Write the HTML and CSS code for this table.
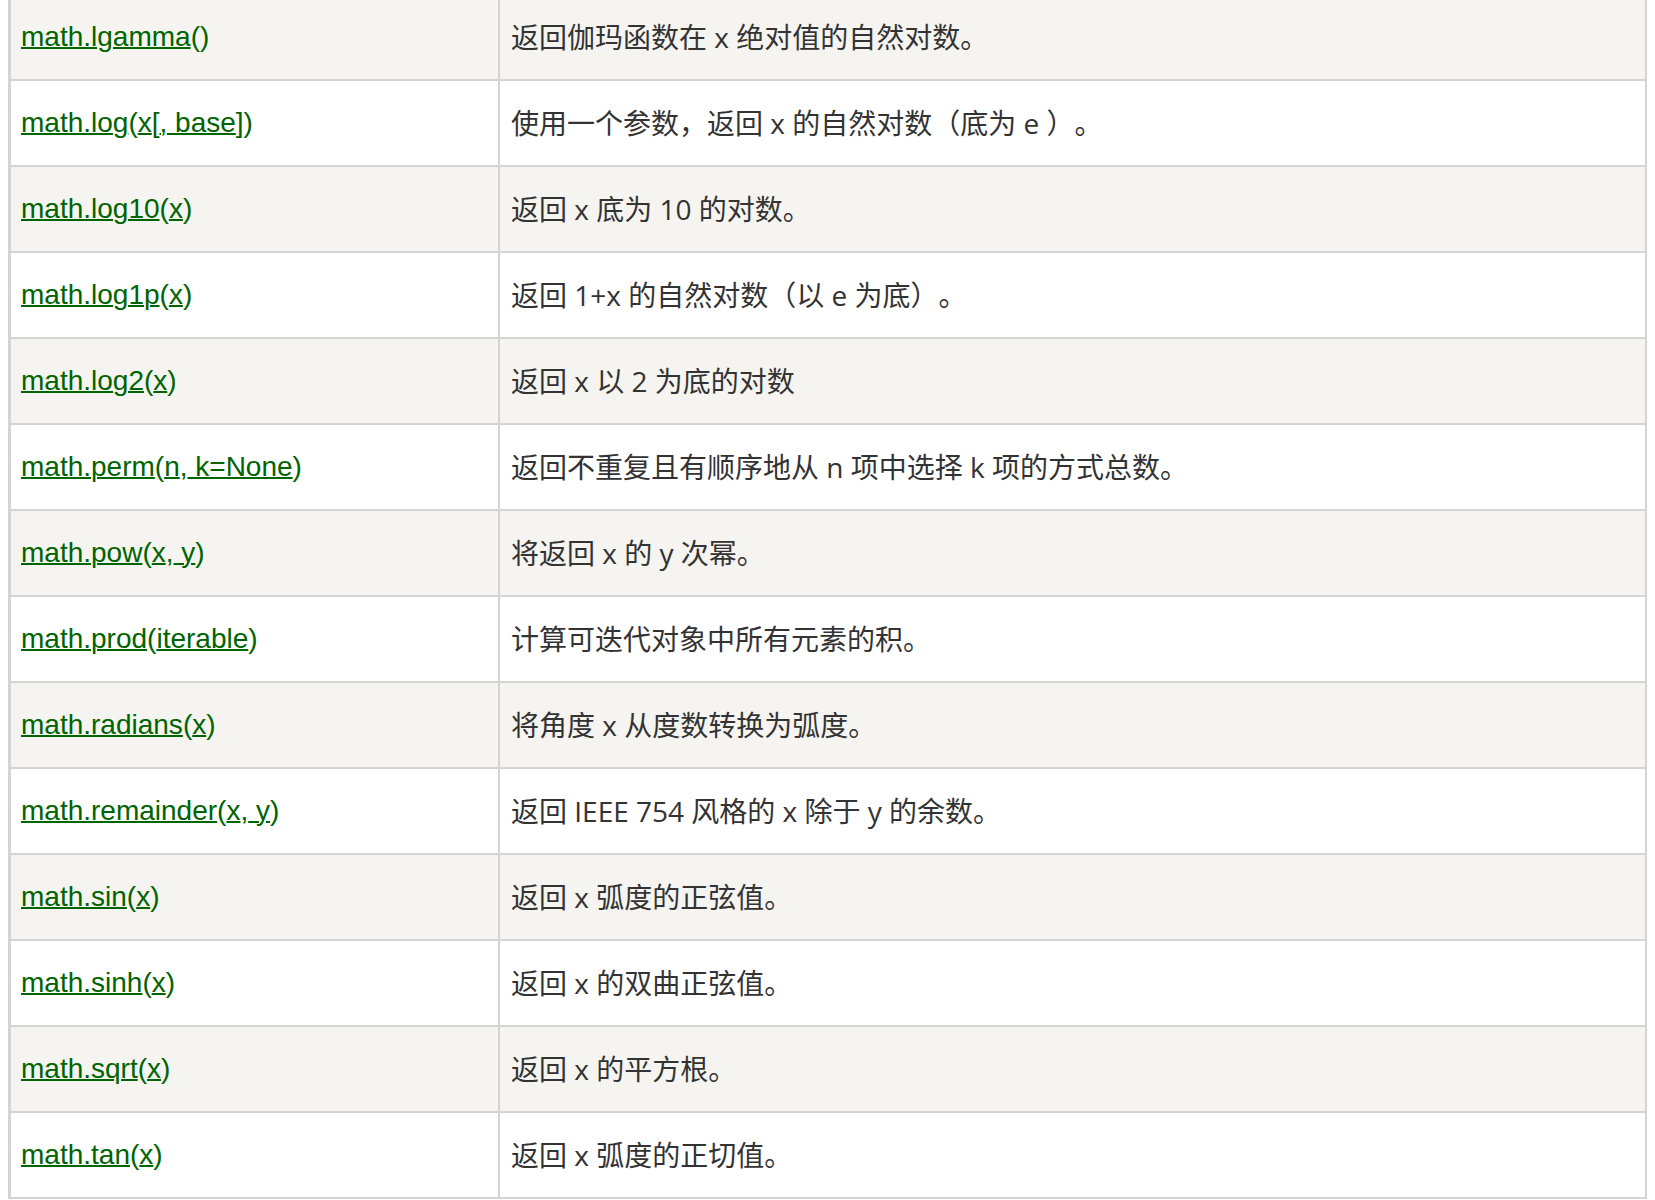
FILE: index.html
```html
<!DOCTYPE html>
<html lang="zh-CN">
<head>
<meta charset="utf-8">
<title>math</title>
<link rel="stylesheet" href="styles.css">
</head>
<body>
<table class="ref">
<tbody>
<tr><td class="fn"><a class="sig"><u>math.lgamma</u>()</a></td><td class="desc">返回伽玛函数在 x 绝对值的自然对数。</td></tr>
<tr><td class="fn"><a class="sig"><u>math.log</u>(<u>x</u>[<u>, base</u>])</a></td><td class="desc">使用一个参数，返回 x 的自然对数（底为 e ）。</td></tr>
<tr><td class="fn"><a class="sig"><u>math.log10</u>(<u>x</u>)</a></td><td class="desc">返回 x 底为 10 的对数。</td></tr>
<tr><td class="fn"><a class="sig"><u>math.log1p</u>(<u>x</u>)</a></td><td class="desc">返回 1+x 的自然对数（以 e 为底）。</td></tr>
<tr><td class="fn"><a class="sig"><u>math.log2</u>(<u>x</u>)</a></td><td class="desc">返回 x 以 2 为底的对数</td></tr>
<tr><td class="fn"><a class="sig"><u>math.perm</u>(<u>n</u>,<u> k=None</u>)</a></td><td class="desc">返回不重复且有顺序地从 n 项中选择 k 项的方式总数。</td></tr>
<tr><td class="fn"><a class="sig"><u>math.pow</u>(<u>x</u>,<u> y</u>)</a></td><td class="desc">将返回 x 的 y 次幂。</td></tr>
<tr><td class="fn"><a class="sig"><u>math.prod</u>(<u>iterable</u>)</a></td><td class="desc">计算可迭代对象中所有元素的积。</td></tr>
<tr><td class="fn"><a class="sig"><u>math.radians</u>(<u>x</u>)</a></td><td class="desc">将角度 x 从度数转换为弧度。</td></tr>
<tr><td class="fn"><a class="sig"><u>math.remainder</u>(<u>x</u>,<u> y</u>)</a></td><td class="desc">返回 IEEE 754 风格的 x 除于 y 的余数。</td></tr>
<tr><td class="fn"><a class="sig"><u>math.sin</u>(<u>x</u>)</a></td><td class="desc">返回 x 弧度的正弦值。</td></tr>
<tr><td class="fn"><a class="sig"><u>math.sinh</u>(<u>x</u>)</a></td><td class="desc">返回 x 的双曲正弦值。</td></tr>
<tr><td class="fn"><a class="sig"><u>math.sqrt</u>(<u>x</u>)</a></td><td class="desc">返回 x 的平方根。</td></tr>
<tr><td class="fn"><a class="sig"><u>math.tan</u>(<u>x</u>)</a></td><td class="desc">返回 x 弧度的正切值。</td></tr>
</tbody>
</table>
</body>
</html>
```
FILE: styles.css
```css
html, body {
  margin: 0;
  padding: 0;
  background: #ffffff;
}

.ref {
  margin: -5px 0 0 8px;
  width: 1639px;
  border-collapse: separate;
  border-spacing: 0;
  table-layout: fixed;
}

.ref tr:nth-child(odd) {
  background: #f5f4f0;
}

.ref td {
  height: 86px;
  box-sizing: border-box;
  padding: 0;
  vertical-align: middle;
  line-height: 42px;
  border-bottom: 2px solid #d4d4d4;
  white-space: nowrap;
}

.ref td.fn {
  width: 492px;
  border-left: 3px solid #d4d4d4;
  border-right: 2px solid #d4d4d4;
  padding-left: 10px;
  font-family: "Liberation Sans", Arial, sans-serif;
  font-size: 28px;
}

.ref td.desc {
  border-right: 2px solid #d4d4d4;
  padding-left: 11px;
  font-family: "Open Sans", "Noto Sans CJK SC", sans-serif;
  font-size: 28px;
  color: #333333;
  text-spacing-trim: space-all;
  font-feature-settings: "halt" 0, "chws" 0;
}

.sig {
  color: #006400;
  text-decoration: none;
}

.sig u {
  text-decoration: underline;
  text-decoration-thickness: 2px;
}
```
